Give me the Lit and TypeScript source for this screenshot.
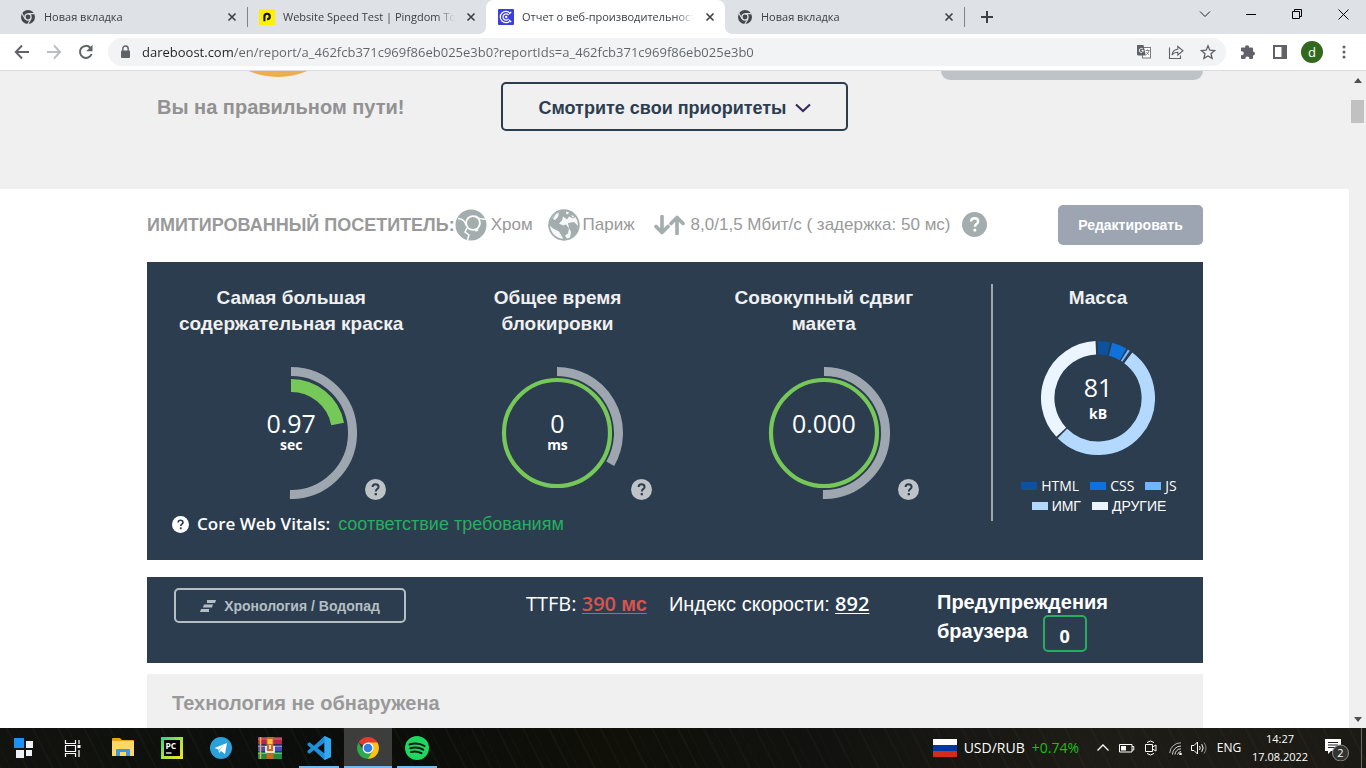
import { LitElement, html, svg, css, nothing, TemplateResult } from "lit";
import { customElement, property } from "lit/decorators.js";
import { classMap } from "lit/directives/class-map.js";

function arcPath(c: number, r: number, from: number, to: number): string {
  const point = (deg: number) => {
    const a = ((deg - 90) * Math.PI) / 180;
    return `${(c + r * Math.cos(a)).toFixed(2)} ${(c + r * Math.sin(a)).toFixed(2)}`;
  };
  return `M${point(from)}A${r} ${r} 0 ${to - from > 180 ? 1 : 0} 1 ${point(to)}`;
}

const chromeGray = html`<svg width="16" height="16" viewBox="0 0 16 16">
  <circle cx="8" cy="8" r="7" fill="#43474b" />
  <circle cx="8" cy="8" r="3.7" fill="#dee1e6" /><circle cx="8" cy="8" r="2.4" fill="#43474b" />
  <path d="M8 4.6h6.6M5 9.7L1.8 4.1M11 9.7l-3.2 5.4" stroke="#dee1e6" stroke-width="1.1" />
</svg>`;

const pingdom = html`<svg width="16" height="16" viewBox="0 0 16 16">
  <rect width="16" height="16" fill="#fff000" />
  <path d="M5.4 12.2V7.4a2.7 2.7 0 1 1 2.7 2.7" fill="none" stroke="#111" stroke-width="2.1" />
</svg>`;

const dareboost = html`<svg width="16" height="16" viewBox="0 0 16 16">
  <rect width="16" height="16" rx="1" fill="#3a3fe0" />
  <path d="M13.2 2.800L11.200 5M13.200 13.200L11.200 11M12 4.200A5.600 5.600 0 1 0 12 11.800M10.600 6.200a3.100 3.100 0 1 0 0 3.600" fill="none" stroke="#fff" stroke-width="1.200" />
  <circle cx="8.200" cy="8" r="1.200" fill="#fff" />
</svg>`;

const closeIcon = html`<svg width="16" height="16" viewBox="0 0 16 16"><path d="M4.500 4.500l7 7M11.500 4.500l-7 7" stroke="#3c4043" stroke-width="1.600" /></svg>`;

interface Tab { title: string; icon: TemplateResult; active?: boolean; line?: boolean; }

const tabs: Tab[] = [
  { title: "Новая вкладка", icon: chromeGray, line: true },
  { title: "Website Speed Test | Pingdom Tools", icon: pingdom },
  { title: "Отчет о веб-производительности", icon: dareboost, active: true },
  { title: "Новая вкладка", icon: chromeGray, line: true },
];

@customElement("browser-chrome")
export class BrowserChrome extends LitElement {
  static styles = css`
    :host { display: block; font-family: "Open Sans", sans-serif; }
    button { border: 0; padding: 0; background: none; color: inherit; font: inherit; display: grid; place-items: center; }
    svg { display: block; }
    .strip { display: flex; height: 34px; padding-left: 8px; background: #dee1e6; }
    .tab { display: flex; align-items: center; gap: 8px; flex: 0 1 239px; box-sizing: border-box; min-width: 0; padding: 0 7px 0 12px; font-size: 11px; color: #3c4043; position: relative; }
    .tab.active { background: #fff; border-radius: 8px 8px 0 0; }
    .tab.active::before, .tab.active::after { content: ""; position: absolute; bottom: 0; width: 8px; height: 8px; }
    .tab.active::before { left: -8px; background: radial-gradient(circle at 0 0, transparent 8px, #fff 8px); }
    .tab.active::after { right: -8px; background: radial-gradient(circle at 100% 0, transparent 8px, #fff 8px); }
    .tab.line::after { content: ""; position: absolute; right: -1px; top: 7px; width: 1px; height: 20px; background: #808388; }
    .title { flex: 1; white-space: nowrap; overflow: hidden; line-height: 20px; -webkit-mask-image: linear-gradient(90deg, #000 calc(100% - 18px), transparent); }
    .new { width: 46px; }
    .window { display: flex; margin-left: auto; }
    .window button { width: 46px; height: 28px; }
    .bar { display: flex; align-items: center; height: 36px; padding: 0 6px; background: #fff; border-bottom: 1px solid #d9dbde; color: #5f6368; }
    .bar button { width: 32px; height: 32px; flex: none; }
    .omnibox { flex: 1; display: flex; align-items: center; min-width: 0; height: 28px; margin: 0 6px; padding: 0 2px 0 9px; border-radius: 14px; background: #f1f3f4; }
    .url { flex: 1; min-width: 0; margin-left: 9px; padding: 0; border: 0; outline: 0; font: 13px/24px "Open Sans", sans-serif; color: transparent; background: linear-gradient(90deg, #202124 91px, #5f6368 91px); -webkit-background-clip: text; background-clip: text; }
    .avatar { display: grid; place-items: center; width: 22px; height: 22px; border-radius: 50%; background: #33691e; color: #fff; font-size: 13px; line-height: 20px; }
  `;

  render() {
    return html`
      <div class="strip" role="tablist">
        ${tabs.map((t) => html`
          <div role="tab" aria-selected=${t.active ? "true" : "false"} class=${classMap({ tab: true, active: !!t.active, line: !!t.line })}>
            ${t.icon}<span class="title">${t.title}</span>
            <button aria-label="Закрыть вкладку">${closeIcon}</button>
          </div>`)}
        <button class="new" aria-label="Новая вкладка"><svg width="14" height="14" viewBox="0 0 14 14"><path d="M7 1v12M1 7h12" stroke="#3c4043" stroke-width="2" /></svg></button>
        <div class="window">
          <button aria-label="Поиск вкладок"><svg width="12" height="12" viewBox="0 0 12 12"><path d="M1 3.500l5 5 5-5" fill="none" stroke="#222" /></svg></button>
          <button aria-label="Свернуть"><svg width="10" height="10" viewBox="0 0 10 10"><path d="M0 5.500h10" stroke="#000" /></svg></button>
          <button aria-label="Восстановить"><svg width="10" height="10" viewBox="0 0 10 10"><path d="M.5 2.500h7v7h-7zM2.500 2.500v-2h7v7h-2" fill="none" stroke="#000" /></svg></button>
          <button aria-label="Закрыть"><svg width="11" height="11" viewBox="0 0 11 11"><path d="M.5.5l10 10M10.500.5l-10 10" stroke="#000" /></svg></button>
        </div>
      </div>
      <div class="bar">
        <button aria-label="Назад"><svg width="16" height="16" viewBox="0 0 16 16"><path d="M15 8H2.500M8 1.500L1.800 8 8 14.500" fill="none" stroke="#5f6368" stroke-width="1.900" /></svg></button>
        <button aria-label="Вперед"><svg width="16" height="16" viewBox="0 0 16 16"><path d="M1 8h12.500M8 1.500L14.200 8 8 14.500" fill="none" stroke="#bbbdc0" stroke-width="1.900" /></svg></button>
        <button aria-label="Обновить"><svg width="16" height="16" viewBox="0 0 16 16"><path d="M13.600 10A6 6 0 1 1 12.300 3.700" fill="none" stroke="#5f6368" stroke-width="2" /><path d="M14.500.8v6.400H8.200z" fill="#5f6368" /></svg></button>
        <div class="omnibox">
          <svg width="16" height="16" viewBox="0 0 16 16"><rect x="4" y="6.500" width="9" height="7.500" rx="1" fill="#5f6368" /><path d="M5.800 7V4.700a2.700 2.700 0 0 1 5.400 0V7" fill="none" stroke="#5f6368" stroke-width="1.400" /></svg>
          <input class="url" aria-label="Адрес" spellcheck="false" value="dareboost.com/en/report/a_462fcb371c969f86eb025e3b0?reportIds=a_462fcb371c969f86eb025e3b0" />
          <button aria-label="Перевести"><svg width="16" height="16" viewBox="0 0 16 16"><rect x="6.500" y="3.500" width="8" height="10.500" fill="#fff" stroke="#777b80" /><path d="M1 1h6.500l2.300 10.500H2L1 10.500z" fill="#5f6368" /><path d="M6.900 5.200A2 2 0 1 0 7.300 6.500H5.500" fill="none" stroke="#fff" /><path d="M9.500 6.500h4M11.500 5.500v1M13 6.500c-.4 2-1.500 3.400-2.800 4.300M10.300 8l2.600 2.800" fill="none" stroke="#777b80" stroke-width=".9" /></svg></button>
          <button aria-label="Поделиться"><svg width="16" height="16" viewBox="0 0 16 16"><path d="M1.500 3.500v11h11v-3M4 11C4.500 7.500 6.500 5.500 9.800 5.300V2.500L15 6.700 9.800 11V8.300C7.300 8.300 5.500 9 4 11z" fill="none" stroke="#5f6368" stroke-width="1.100" /></svg></button>
          <button aria-label="В закладки"><svg width="16" height="16" viewBox="0 0 16 16"><path d="M8 1.800l1.800 4.400 4.800.4-3.600 3.100 1.100 4.700L8 11.900l-4.100 2.500L5 9.700 1.400 6.600l4.800-.4z" fill="none" stroke="#5f6368" stroke-width="1.300" /></svg></button>
        </div>
        <button aria-label="Расширения"><svg width="16" height="16" viewBox="0 0 16 16"><path d="M1 4.500q0-1 1-1h3.200a1.900 1.900 0 1 1 3.700 0H12q1 0 1 1v3a2 2 0 1 1 0 4V14q0 1-1 1H9.200a2 2 0 1 0-3.800 0H2q-1 0-1-1v-2.900a2 2 0 1 0 0-3.700z" fill="#5f6368" /></svg></button>
        <button aria-label="Боковая панель"><svg width="14" height="14" viewBox="0 0 14 14"><path d="M0 0h14v14H0zM2 2v10h6.500V2z" fill="#5f6368" fill-rule="evenodd" /></svg></button>
        <button aria-label="Профиль"><span class="avatar">d</span></button>
        <button aria-label="Меню"><svg width="4" height="14" viewBox="0 0 4 14"><g fill="#5f6368"><circle cx="2" cy="2" r="1.500" /><circle cx="2" cy="7" r="1.500" /><circle cx="2" cy="12" r="1.500" /></g></svg></button>
      </div>`;
  }
}

@customElement("help-dot")
export class HelpDot extends LitElement {
  @property({ type: Number }) size = 21;
  @property() fill = "#bdc3c7";
  @property() ink = "#2c3d4f";
  static styles = css`
    :host { display: inline-flex; }
    button { display: block; padding: 0; border: 0; background: none; }
    svg { display: block; }
  `;
  render() {
    return html`<button aria-label="Справка"><svg width=${this.size} height=${this.size} viewBox="0 0 20 20">
      <circle cx="10" cy="10" r="10" fill=${this.fill} />
      <path d="M7.200 7.600C7.300 5.900 8.500 5 10 5c1.700 0 2.900 1 2.900 2.500 0 2.100-2.600 2.100-2.600 4.300" fill="none" stroke=${this.ink} stroke-width="1.900" />
      <rect x="9.200" y="13.300" width="2.200" height="2.200" rx=".6" fill=${this.ink} />
    </svg></button>`;
  }
}

@customElement("metric-gauge")
export class MetricGauge extends LitElement {
  @property({ attribute: false }) lines: string[] = [];
  @property() value = "";
  @property() unit = "";
  @property({ type: Number }) limit = 180;
  @property({ type: Number }) score = 0;
  static styles = css`
    :host { display: block; }
    h3 { margin: 0 0 30px; padding-top: 1px; font: bold 19px/26px "Liberation Sans", sans-serif; color: #f0f0f0; text-align: center; }
    .line { display: block; white-space: nowrap; }
    .row { display: grid; grid-template-columns: 1fr 132px 1fr; column-gap: 8px; align-items: end; }
    .dial { grid-column: 2; display: grid; height: 133px; }
    .dial > * { grid-area: 1 / 1; }
    .text { padding-top: 42px; text-align: center; color: #fff; }
    .value { font-size: 25px; line-height: 28px; }
    .unit { font-size: 14px; line-height: 16px; font-weight: 700; }
  `;
  render() {
    return html`
      <h3>${this.lines.map((l) => html`<span class="line">${l}</span>`)}</h3>
      <div class="row">
        <div class="dial">
          <svg width="132" height="132" viewBox="0 0 132 132" fill="none">
            <path d=${arcPath(66, 61.5, 0, this.limit)} stroke="#9ea7af" stroke-width="9" />
            ${this.score
              ? svg`<path d=${arcPath(66, 47.5, 0, this.score)} stroke="#76c958" stroke-width="13" />`
              : svg`<circle cx="66" cy="66" r="53" stroke="#76c958" stroke-width="4.200" />`}
          </svg>
          <div class="text">
            <div class="value">${this.value}</div>
            ${this.unit ? html`<div class="unit">${this.unit}</div>` : nothing}
          </div>
        </div>
        <help-dot></help-dot>
      </div>`;
  }
}

const weights = [
  { name: "HTML", color: "#0c529c", from: 0, to: 12.3 },
  { name: "CSS", color: "#0f72dc", from: 14.4, to: 29.8 },
  { name: "JS", color: "#6fb5ff", from: 31.6, to: 34 },
  { name: "ИМГ", color: "#b3d9ff", from: 37, to: 225 },
  { name: "ДРУГИЕ", color: "#ebf5ff", from: 227, to: 357.5 },
];

@customElement("weight-chart")
export class WeightChart extends LitElement {
  static styles = css`
    :host { display: block; text-align: center; color: #fff; }
    h3 { margin: 0 0 30px; padding-top: 1px; font: bold 19px/26px "Liberation Sans", sans-serif; color: #f0f0f0; }
    .dial { display: grid; justify-items: center; height: 114px; }
    .dial > * { grid-area: 1 / 1; }
    .text { padding-top: 32px; }
    .value { font-size: 25px; line-height: 28px; }
    .unit { font-size: 14px; line-height: 26px; font-weight: 700; }
    .legend { display: flex; flex-wrap: wrap; justify-content: center; column-gap: 11px; margin: 21px 22px 0 24px; padding: 0; list-style: none; font-size: 14px; line-height: 20px; }
    .legend li { display: flex; align-items: center; gap: 4px; }
    .cyr { font-family: "Liberation Sans", sans-serif; }
    .swatch { width: 16px; height: 8px; }
  `;
  render() {
    return html`
      <h3>Масса</h3>
      <div class="dial">
        <svg width="114" height="114" viewBox="0 0 114 114" fill="none">
          ${weights.map((w) => svg`<path d=${arcPath(57, 50.3, w.from, w.to)} stroke=${w.color} stroke-width="13.400" />`)}
        </svg>
        <div class="text"><div class="value">81</div><div class="unit">kB</div></div>
      </div>
      <ul class="legend">
        ${weights.map((w, i) => html`<li class=${classMap({ cyr: i > 2 })}><span class="swatch" style="background:${w.color}"></span>${w.name}</li>`)}
      </ul>`;
  }
}

@customElement("speed-report")
export class SpeedReport extends LitElement {
  static styles = css`
    :host { display: block; overflow: hidden; background: #fff; font-family: "Open Sans", sans-serif; }
    button { cursor: pointer; }
    svg { display: block; }
    .wrap { padding: 0 146px 0 147px; }
    .cyr, h2 { font-family: "Liberation Sans", sans-serif; }
    .hero { background: #f0f0f0; }
    .hero .wrap { display: grid; grid-template-columns: 354px 347px 1fr; height: 118px; align-items: start; }
    .arc { margin-left: 100px; }
    .verdict { margin: 16px 0 0 10px; font: bold 20px/28px "Liberation Sans", sans-serif; color: #929292; white-space: nowrap; }
    .priorities { display: flex; align-items: center; justify-content: center; gap: 8px; height: 49px; margin-top: 11px; padding: 2px 0 0; border: 2px solid #2c3d4f; border-radius: 5px; background: none; color: #2c3d4f; font: bold 18px/24px "Liberation Sans", sans-serif; }
    .stub { justify-self: end; width: 262px; height: 9px; border-radius: 0 0 9px 9px; background: #bdc3c7; }
    .visitor { display: flex; align-items: center; height: 73px; box-sizing: border-box; padding-bottom: 2px; color: #999; font: 17px/24px "Liberation Sans", sans-serif; white-space: nowrap; }
    .visitor strong { font-size: 18px; }
    .item { display: flex; align-items: center; gap: 6px; margin-left: 19px; }
    .item.first { margin-left: 0; gap: 4px; }
    .item.place { gap: 3px; margin-left: 15px; }
    .item.last { margin-left: 12px; }
    .edit { margin-left: auto; width: 145px; height: 40px; border: 0; border-radius: 5px; background: #9ca5b1; color: #fff; font: bold 14px/20px "Liberation Sans", sans-serif; }
    .panel { background: #2c3d4f; color: #fff; }
    .main { display: grid; grid-template-columns: 1fr 212px; height: 298px; box-sizing: border-box; padding-top: 22px; }
    .metrics { display: grid; grid-template-columns: repeat(3, 1fr); padding: 0 34px 0 11px; }
    .vitals { display: flex; align-items: center; gap: 8px; margin: 11px 0 0 25px; font-size: 17px; line-height: 26px; font-weight: 600; }
    .pass { color: #27ae60; font: 18px/26px "Liberation Sans", sans-serif; }
    .mass { height: 237px; border-left: 2px solid #9ea7af; }
    .facts { display: grid; grid-template-columns: 379px 1fr 266px; align-items: start; height: 86px; margin-top: 17px; box-sizing: border-box; padding-top: 11px; }
    .timeline { display: flex; align-items: center; justify-content: center; gap: 8px; width: 232px; height: 35px; margin-left: 27px; border: 2px solid #b4bfc4; border-radius: 5px; background: none; color: #b4bfc4; font: bold 14px/20px "Liberation Sans", sans-serif; }
    .numbers { display: flex; gap: 22px; padding-top: 2px; font-size: 20px; line-height: 28px; white-space: nowrap; }
    .numbers a { color: #fff; font-weight: 600; text-underline-offset: 2px; text-decoration-thickness: 1px; }
    .numbers a.slow { color: #d9534f; }
    .warn { font: bold 20px/29px "Liberation Sans", sans-serif; }
    .warn div { display: flex; align-items: center; gap: 15px; height: 29px; }
    .count { display: grid; place-items: center; box-sizing: border-box; width: 44px; height: 37px; margin-top: 3px; padding-top: 5px; border: 2px solid #27ae60; border-radius: 5px; font: bold 18px/24px "Open Sans", sans-serif; }
    .tech { margin-top: 11px; padding: 15px 25px 40px; background: #f0f0f0; }
    h2 { margin: 0; font-size: 20px; line-height: 28px; color: #999; }
  `;

  render() {
    return html`
      <section class="hero"><div class="wrap">
        <div>
          <svg class="arc" width="62" height="6" viewBox="0 0 62 6"><circle cx="31" cy="-69" r="75" fill="#f0ad4e" /></svg>
          <p class="verdict">Вы на правильном пути!</p>
        </div>
        <button class="priorities">Смотрите свои приоритеты
          <svg width="16" height="10" viewBox="0 0 16 10"><path d="M1 1.500L8 8l7-6.500" fill="none" stroke="#3a2a5c" stroke-width="2.200" /></svg>
        </button>
        <div class="stub"></div>
      </div></section>
      <div class="wrap">
        <div class="visitor">
          <strong>ИМИТИРОВАННЫЙ ПОСЕТИТЕЛЬ:</strong>
          <span class="item first">
            <svg width="32" height="32" viewBox="0 0 32 32"><circle cx="16" cy="16" r="15.500" fill="#a3adad" /><circle cx="18" cy="14" r="7.800" fill="#fff" /><circle cx="18" cy="14" r="6" fill="#a3adad" /><path d="M20 6.800Q25 11 31 10M3 9.500q7 .5 8 7M20 21.500q1.500 1 3-1M12 19l-2 4 4 3-1.500 5" fill="none" stroke="#fff" stroke-width="1.500" /></svg>
            Хром</span>
          <span class="item place">
            <svg width="32" height="32" viewBox="0 0 32 32"><circle cx="16" cy="16" r="14.800" fill="#f7f8f8" stroke="#a3adad" stroke-width="1.800" /><path d="M5 8Q9 2 16 1.500q8 0 12 6l-3 2-4-2-2 3-4-3-1 4-3 3 4 2 3-1 3 4-1 5-3 2 2 3-3 2-2-4-3-5-6-3-3-3-2 2Q1 12 5 8zM20 14l6-1 4 4q0 5-3 9l-5 3 1-6-2-4z" fill="#a3adad" /><path d="M8 5l3-1-1 4-3 3-2-1zM18 2.500l3 1-1 2-2-1zM23 6l3 1-1 2z" fill="#f7f8f8" /></svg>
            Париж</span>
          <span class="item">
            <svg width="31" height="20" viewBox="0 0 31 20"><path d="M8 1.500v15M2 11.500l6 6 6-6M23 18.500v-15M17 8.500l6-6 6 6" fill="none" stroke="#a3adad" stroke-width="3.600" stroke-linecap="round" stroke-linejoin="round" /></svg>
            8,0/1,5 Мбит/с ( задержка: 50 мс)</span>
          <span class="item last"><help-dot .size=${25} fill="#a3adad" ink="#fff"></help-dot></span>
          <button class="edit">Редактировать</button>
        </div>
        <section class="panel main">
          <div>
            <div class="metrics">
              <metric-gauge .lines=${["Самая большая", "содержательная краска"]} value="0.97" unit="sec" .limit=${181} .score=${79}></metric-gauge>
              <metric-gauge .lines=${["Общее время", "блокировки"]} value="0" unit="ms" .limit=${120}></metric-gauge>
              <metric-gauge .lines=${["Совокупный сдвиг", "макета"]} value="0.000" .limit=${181}></metric-gauge>
            </div>
            <div class="vitals"><help-dot .size=${17} fill="#fff"></help-dot>Core Web Vitals: <span class="pass">соответствие требованиям</span></div>
          </div>
          <div class="mass"><weight-chart></weight-chart></div>
        </section>
        <section class="panel facts">
          <button class="timeline"><svg width="16" height="12" viewBox="0 0 16 12"><path d="M7 0h9l-1 3H7zM4 4.500h9l-1 3H3zM1 9h8v3H0z" fill="#b4bfc4" /></svg>Хронология / Водопад</button>
          <div class="numbers">
            <span>TTFB: <a class="slow" href="#ttfb">390 <span class="cyr">мс</span></a></span>
            <span><span class="cyr">Индекс скорости:</span> <a href="#index">892</a></span>
          </div>
          <div class="warn"><div>Предупреждения</div><div>браузера <span class="count">0</span></div></div>
        </section>
        <section class="tech"><h2>Технология не обнаружена</h2></section>
      </div>`;
  }
}

interface App { name: string; icon: TemplateResult; open?: boolean; focus?: boolean; }

const apps: App[] = [
  { name: "Проводник", icon: html`<svg width="22" height="20" viewBox="0 0 22 20"><path d="M0 1q0-1 1-1h7l2 2h11q1 0 1 1v15H0z" fill="#e8a317" /><path d="M0 3h22v15H0z" fill="#ffd767" /><path d="M4 18v-6q0-1 1-1h12q1 0 1 1v6h-4v-4H8v4z" fill="#3f97de" /></svg>` },
  { name: "PyCharm", icon: html`<svg width="22" height="22" viewBox="0 0 22 22"><defs><linearGradient id="p" x2="1" y2="1"><stop stop-color="#21d789" /><stop offset=".5" stop-color="#a8e53c" /><stop offset="1" stop-color="#f4e52c" /></linearGradient></defs><rect width="22" height="22" fill="url(#p)" /><rect x="3" y="3" width="16" height="16" fill="#000" /><text x="4.500" y="11.500" font-family="Open Sans" font-weight="700" font-size="8.500" fill="#fff">PC</text><path d="M5 16h5.500" stroke="#fff" stroke-width="1.300" /></svg>` },
  { name: "Telegram", icon: html`<svg width="22" height="22" viewBox="0 0 22 22"><circle cx="11" cy="11" r="11" fill="#2ba0da" /><path d="M4.500 11L17 6l-2 11-4-3-2 2-.5-3.500z" fill="#fff" /><path d="M8.500 12.500L14.500 8 10 13l-1 3z" fill="#a9cfe6" /></svg>` },
  { name: "WinRAR", icon: html`<svg width="24" height="22" viewBox="0 0 24 22"><path d="M0 0h24v7H0z" fill="#b3284a" /><path d="M0 7.500h24v6.500H0z" fill="#4d4cb5" /><path d="M0 14.500h24V22H0z" fill="#228a45" /><path d="M0 2h24M0 9.500h24M0 16.500h24" stroke="#fff" stroke-opacity=".35" /><path d="M2.500 0v22" stroke="#e1b53c" stroke-width="1.500" /><path d="M8.500 0h7v22h-7z" fill="#c66a1b" /><path d="M9.500 2h5v5h-5z" fill="#ffc24a" /><path d="M8 9v6h8V9M12 8v4" fill="none" stroke="#fff" stroke-width="1.600" /></svg>` },
  { name: "VS Code", open: true, icon: html`<svg width="24" height="24" viewBox="0 0 24 24"><path d="M17.500 0L24 3v18l-6.500 3L7 14.200 2.500 17.800.5 16.500v-1.700L3.800 12 .5 9.200V7.500l2-1.300L7 9.800z" fill="#1f8fd8" /><path d="M17.500 6.500v11L10.500 12z" fill="#0d0e0c" /><path d="M17.500 0L24 3v18l-6.500 3z" fill="#31a8f2" /></svg>` },
  { name: "Chrome", open: true, focus: true, icon: html`<svg width="22" height="22" viewBox="0 0 22 22"><path d="M11 11L1.500 5.500A11 11 0 0 1 20.500 5.500z" fill="#e33b2e" /><path d="M11 11V5.500h9.500A11 11 0 0 1 11 22z" fill="#fbc116" /><path d="M11 11l4.800 2.700L11 22A11 11 0 0 1 1.500 5.500l4.700 8.200z" fill="#2da94f" /><circle cx="11" cy="11" r="5.500" fill="#fff" /><circle cx="11" cy="11" r="4.300" fill="#2f7de9" /></svg>` },
  { name: "Spotify", open: true, icon: html`<svg width="24" height="24" viewBox="0 0 24 24"><circle cx="12" cy="12" r="12" fill="#1ed760" /><path d="M4.500 8.500q8-2.500 15 1.500M5.300 12.300q7-2 12.900 1.400M6 16q5.500-1.500 10.500 1.200" fill="none" stroke="#10180f" stroke-width="2" stroke-linecap="round" /></svg>` },
];

@customElement("task-bar")
export class TaskBar extends LitElement {
  static styles = css`
    :host { display: flex; height: 40px; color: #fff; font: 12px/18px "Open Sans", sans-serif;
      background: repeating-linear-gradient(63deg, rgba(120, 130, 90, 0.05) 0 2px, transparent 2px 9px, rgba(80, 95, 60, 0.06) 9px 10px, transparent 10px 23px), linear-gradient(90deg, #12130f, #0b0d0a 25%, #101009 45%, #11110f 60%, #1d1c16 80%, #1b1a15); }
    button { display: grid; place-items: center; flex: none; width: 48px; height: 40px; padding: 0; border: 0; background: none; box-sizing: border-box; color: inherit; font: inherit; }
    svg { display: block; }
    .apps { display: flex; gap: 1px; margin-left: 3px; }
    .app { position: relative; }
    .focus { background: #3d3e3b; }
    .open::after { content: ""; position: absolute; left: 4px; right: 4px; bottom: 0; height: 2px; background: #76b9ed; }
    .focus::after { left: 0; right: 0; }
    .tray { display: flex; align-items: center; margin-left: auto; white-space: nowrap; }
    .rate { display: flex; align-items: center; gap: 7px; margin-right: 12px; font-size: 14px; }
    .up { color: #16c016; }
    .tray .t { width: 24px; }
    .lang { width: 36px; text-align: center; }
    .clock { width: 66px; text-align: center; font-size: 11px; }
    .tray .note { width: 48px; }
    .edge { align-self: stretch; width: 4px; border-left: 1px solid #6a6a66; }
  `;
  render() {
    return html`
      <button aria-label="Пуск"><svg width="20" height="20" viewBox="0 0 20 20"><path d="M0 0h10v10H0z" fill="#1f8ff0" /><path d="M12 3h7v7h-7zM2 12h8v8H2zM12 12h6v6h-6z" fill="#eef1f7" /></svg></button>
      <button aria-label="Представление задач"><svg width="17" height="17" viewBox="0 0 17 17"><path d="M1.500 0v3.500h10V0M1.500 17v-3.500h10V17M1.500 5.500h10v6h-10zM15 0v4M15 10v7" fill="none" stroke="#fff" stroke-width="1.200" /><path d="M13.500 5h3v3h-3z" fill="#fff" /></svg></button>
      <div class="apps">
        ${apps.map((a) => html`<button aria-label=${a.name} class=${classMap({ app: true, open: !!a.open, focus: !!a.focus })}>${a.icon}</button>`)}
      </div>
      <div class="tray">
        <span class="rate"><svg width="24" height="18" viewBox="0 0 24 18"><path d="M0 0h24v6H0z" fill="#fff" /><path d="M0 6h24v6H0z" fill="#0039a6" /><path d="M0 12h24v6H0z" fill="#d52b1e" /></svg>USD/RUB <span class="up">+0.74%</span></span>
        <button class="t" aria-label="Скрытые значки"><svg width="12" height="8" viewBox="0 0 12 8"><path d="M.5 6.500L6 1l5.500 5.500" fill="none" stroke="#fff" stroke-width="1.300" /></svg></button>
        <button class="t" aria-label="Батарея"><svg width="16" height="10" viewBox="0 0 16 10"><path d="M.5 1.500h12.500v7.500H.5zM13 3.500h1.800v3.500H13" fill="none" stroke="#fff" /><path d="M2 3h5v4.500H2z" fill="#fff" /></svg></button>
        <button class="t" aria-label="Камера"><svg width="12" height="16" viewBox="0 0 12 16"><path d="M.5 4.500h7v7h-7zM7.500 7l3.500-2v6L7.500 9M2 2.500Q5.500-.5 9 2.500M2 13.500q3.500 3 7 0" fill="none" stroke="#fff" /></svg></button>
        <button class="t" aria-label="Wi-Fi"><svg width="13" height="13" viewBox="0 0 13 13"><g fill="none" stroke="#ddd"><path d="M.7 11A11 11 0 0 1 12 .8" stroke-opacity=".8" /><path d="M3.500 12.500A8.500 8.500 0 0 1 12 4M6 12.500A6 6 0 0 1 12 6.800M8.500 12.500A4 4 0 0 1 12 9.500" /></g><circle cx="11.500" cy="12" r="1.300" fill="#fff" /></svg></button>
        <button class="t" aria-label="Звук"><svg width="16" height="14" viewBox="0 0 16 14"><path d="M.5 4.500h2.500L6.500 1v12L3 9.500H.5z" fill="none" stroke="#fff" /><path d="M8.500 5q1.500 2 0 4M10.700 3.200q3 3.800 0 7.600" fill="none" stroke="#fff" /><path d="M13 1.500q4 5.500 0 11" fill="none" stroke="#888" /></svg></button>
        <span class="lang">ENG</span>
        <time class="clock">14:27<br />17.08.2022</time>
        <button class="note" aria-label="Уведомления"><svg width="26" height="26" viewBox="0 0 26 26"><path d="M1 4h16v12H7l-3 3v-3H1z" fill="#fff" /><path d="M4 7.500h10M4 10h10M4 12.500h8" stroke="#222" /><circle cx="16.500" cy="18" r="8" fill="#33332f" stroke="#8d8d88" /><text x="16.500" y="22" text-anchor="middle" font-size="11" fill="#fff" font-family="Open Sans">2</text></svg></button>
        <span class="edge"></span>
      </div>`;
  }
}

@customElement("app-root")
export class AppRoot extends LitElement {
  static styles = css`
    :host { display: flex; flex-direction: column; height: 100vh; overflow: hidden; }
    .view { flex: 1; display: flex; min-height: 0; }
    speed-report { flex: 1; min-width: 0; }
    .scroll { display: flex; flex-direction: column; align-items: center; width: 17px; padding: 7px 0 6px; box-sizing: border-box; background: #f0f0f0; }
    .thumb { width: 13px; height: 23px; margin: 17px 0 auto; background: #c1c1c1; }
    svg { display: block; }
  `;
  render() {
    return html`
      <browser-chrome></browser-chrome>
      <div class="view">
        <speed-report></speed-report>
        <div class="scroll" role="presentation">
          <svg width="8" height="5" viewBox="0 0 8 5"><path d="M4 0l4 5H0z" fill="#505050" /></svg>
          <div class="thumb"></div>
          <svg width="8" height="5" viewBox="0 0 8 5"><path d="M0 0h8L4 5z" fill="#505050" /></svg>
        </div>
      </div>
      <task-bar></task-bar>`;
  }
}
